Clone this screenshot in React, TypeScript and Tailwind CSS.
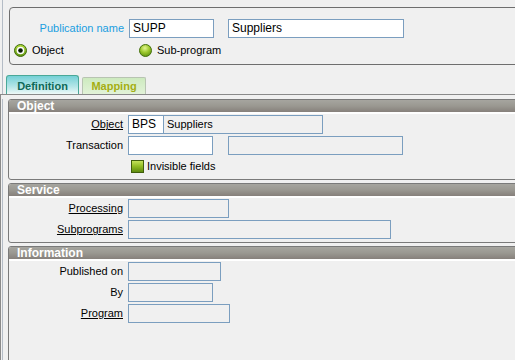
import React from "react";

function RadioOn() {
  return (
    <svg width="13" height="13" viewBox="0 0 13 13">
      <defs>
        <linearGradient id="rg1" x1="0" y1="0" x2="0" y2="1">
          <stop offset="0" stopColor="#b8e040" />
          <stop offset="1" stopColor="#5e9410" />
        </linearGradient>
      </defs>
      <circle cx="6.5" cy="6.5" r="6" fill="url(#rg1)" stroke="#3f6a0c" strokeWidth="1" />
      <circle cx="6.5" cy="6.5" r="3.8" fill="#ffffff" />
      <circle cx="6.5" cy="6.5" r="2.3" fill="#0c1a06" />
    </svg>
  );
}

function RadioOff() {
  return (
    <svg width="13" height="13" viewBox="0 0 13 13">
      <defs>
        <radialGradient id="rg2" cx="0.45" cy="0.3" r="0.75">
          <stop offset="0" stopColor="#e2f590" />
          <stop offset="0.5" stopColor="#9cc82c" />
          <stop offset="1" stopColor="#5a8c10" />
        </radialGradient>
      </defs>
      <circle cx="6.5" cy="6.5" r="6" fill="url(#rg2)" stroke="#45700e" strokeWidth="1" />
    </svg>
  );
}

function CheckBox() {
  return (
    <div className="w-[13px] h-[13px] border border-[#3f5e0c] bg-[linear-gradient(to_bottom,#c4e25a,#8fbb22_50%,#5f8c10)]" />
  );
}

function Header({ title }: { title: string }) {
  return (
    <>
      <div className="h-[12px] bg-[linear-gradient(to_bottom,#a6a59f,#9a9891_50%,#86807b)] pl-[8px] text-[12px] font-bold leading-[12px] text-white">
        {title}
      </div>
      <div className="h-[2px] bg-white" />
    </>
  );
}

function Row({
  label,
  underline,
  children,
}: {
  label: string;
  underline?: boolean;
  children: React.ReactNode;
}) {
  return (
    <div className="flex h-[19px] items-center">
      <div className="w-[115px] pr-[1px] text-right">
        <span className={underline ? "underline" : ""}>{label}</span>
      </div>
      <div className="ml-[4px] flex items-center">{children}</div>
    </div>
  );
}

function Field({ w, white, text }: { w: string; white?: boolean; text?: string }) {
  return (
    <div
      className={`${w} h-[19px] border border-[#7b9ebf] ${white ? "bg-white" : "bg-[#f0f0f0]"} pl-[3px] leading-[17px]`}
    >
      {text}
    </div>
  );
}

export default function App() {
  return (
    <div className="w-[515px] h-[360px] overflow-hidden bg-[#f0f0f0] text-[11px] text-black font-['Liberation_Sans',Arial,sans-serif]">
      {/* top area */}
      <div className="pl-[2px]">
        <div className="flex h-[94px] flex-col border-l border-[#b4bcc6]">
          <div className="ml-[6px] mt-[7px] h-[58px] w-[540px] rounded-[4px] border border-[#6e6e6e]">
            <div className="mt-[11px] flex h-[19px] items-center">
              <div className="w-[114px] text-right text-[#1a9ee0]">Publication name</div>
              <div className="ml-[5px] h-[19px] w-[85px] border border-[#7b9ebf] bg-white pl-[3px] text-[12px] leading-[17px]">
                SUPP
              </div>
              <div className="ml-[14px] h-[19px] w-[176px] border border-[#7b9ebf] bg-white pl-[3px] text-[12px] leading-[17px]">
                Suppliers
              </div>
            </div>
            <div className="mt-[6px] flex h-[13px] items-center">
              <div className="ml-[4px] flex w-[125px] items-center">
                <RadioOn />
                <span className="ml-[5px]">Object</span>
              </div>
              <div className="flex items-center">
                <RadioOff />
                <span className="ml-[5px]">Sub-program</span>
              </div>
            </div>
          </div>
          <div className="mt-auto ml-[3px] flex items-end gap-[3px]">
            <div className="flex h-[19px] w-[73px] items-center justify-center rounded-t-[3px] border border-b-0 border-[#4aa898] bg-[linear-gradient(to_bottom,#74d0d6,#b6e6e8_60%,#eef9f8)] pt-[2px] text-[11px] font-bold text-[#0f6a58]">
              Definition
            </div>
            <div className="flex h-[17px] w-[64px] items-center justify-center rounded-t-[2px] border border-b-0 border-[#b8c4b2] bg-[linear-gradient(to_bottom,#cdeabf,#e2f2d8)] pt-[1px] text-[11px] font-bold text-[#a4ae12]">
              Mapping
            </div>
          </div>
        </div>
      </div>

      {/* tab panel */}
      <div className="h-[266px] border-l border-t border-[#8a8a8a]">
        <div className="ml-[1px] h-full border-l border-[#b4bcc6]">
          {/* Object section */}
          <div className="ml-[5px] mt-[4px] w-[540px] overflow-hidden rounded-[3px] border border-[#7a7a7a]">
            <Header title="Object" />
            <div className="flex flex-col gap-[2px] pt-[1px] pb-[6px]">
              <Row label="Object" underline>
                <div className="flex h-[19px] w-[195px] border border-[#7b9ebf]">
                  <div className="w-[35px] border-r border-[#7b9ebf] bg-white pl-[3px] text-[12px] leading-[17px]">
                    BPS
                  </div>
                  <div className="flex-1 bg-[#f0f0f0] pl-[3px] leading-[17px]">Suppliers</div>
                </div>
              </Row>
              <Row label="Transaction">
                <Field w="w-[85px]" white />
                <div className="ml-[15px]">
                  <Field w="w-[175px]" />
                </div>
              </Row>
              <div className="mt-[3px] flex h-[13px] items-center pl-[122px]">
                <CheckBox />
                <span className="ml-[3px]">Invisible fields</span>
              </div>
            </div>
          </div>

          {/* Service section */}
          <div className="ml-[5px] mt-[3px] w-[540px] overflow-hidden rounded-[3px] border border-[#7a7a7a]">
            <Header title="Service" />
            <div className="flex flex-col gap-[2px] pt-[1px] pb-[3px]">
              <Row label="Processing" underline>
                <Field w="w-[101px]" />
              </Row>
              <Row label="Subprograms" underline>
                <Field w="w-[263px]" />
              </Row>
            </div>
          </div>

          {/* Information section */}
          <div className="ml-[5px] mt-[3px] h-[140px] w-[540px] overflow-hidden rounded-[3px] border border-[#7a7a7a]">
            <Header title="Information" />
            <div className="flex flex-col gap-[2px] pt-[1px]">
              <Row label="Published on">
                <Field w="w-[93px]" />
              </Row>
              <Row label="By">
                <Field w="w-[85px]" />
              </Row>
              <Row label="Program" underline>
                <Field w="w-[102px]" />
              </Row>
            </div>
          </div>
        </div>
      </div>
    </div>
  );
}
